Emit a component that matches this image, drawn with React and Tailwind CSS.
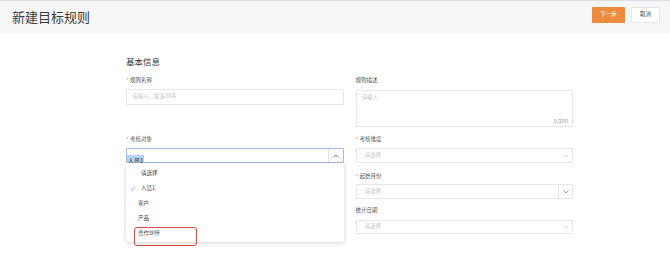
import React from "react";

const Chevron = ({ up = false, color = "#c8c8c8" }) => (
  <svg width="6" height="4" viewBox="0 0 6 4" className="block">
    <path
      d={up ? "M0.5 3.5 L3 1 L5.5 3.5" : "M0.5 0.5 L3 3 L5.5 0.5"}
      fill="none"
      stroke={color}
      strokeWidth="0.8"
    />
  </svg>
);

const Label = ({ req, children }) => (
  <div className="h-[8px] flex items-center text-[5.5px] leading-none text-[#555]">
    {req && <span className="text-[#e07a7a] mr-[2px] w-[2px]">*</span>}
    {!req && null}
    <span>{children}</span>
  </div>
);

const Select = ({ h = "h-[15px]", sep = false, dark = false, mt }) => (
  <div className={`${mt} ${h} border border-[#e6e6e6] rounded-[1px] flex items-center bg-white`}>
    <span className="pl-[8px] text-[5.5px] leading-none text-[#c4c4c4] flex-1">请选择</span>
    {sep && <div className="w-px self-stretch bg-[#e6e6e6]" />}
    <div className="w-[13px] flex justify-center">
      <Chevron color={dark ? "#888" : "#d0d0d0"} />
    </div>
  </div>
);

export default function App() {
  return (
    <div className="w-[670px] h-[277px] bg-white overflow-hidden font-['Noto_Sans_CJK_SC',sans-serif]">
      <header className="h-[33px] bg-[#f5f6f8] border-t border-[#dcdfe4] flex items-start justify-between pl-[12px] pr-[10px]">
        <h1 className="mt-[9px] text-[13px] leading-[14px] text-[#3a3a3a] font-normal">新建目标规则</h1>
        <div className="flex gap-[6px] mt-[6px]">
          <button className="w-[33px] h-[16px] bg-[#ec8b3d] text-white text-[5.5px] leading-none rounded-[1px]">下一步</button>
          <button className="w-[29px] h-[16px] bg-white border border-[#e6e6e6] text-[#444] text-[5.5px] leading-none rounded-[1px]">取消</button>
        </div>
      </header>

      <div className="ml-[126px] w-[447px]">
        <div className="mt-[23px] h-[10px] flex items-center text-[8.5px] leading-none text-[#333]">基本信息</div>

        <div className="grid grid-cols-2 gap-x-[12px] mt-[11px]">
          {/* left column */}
          <div className="flex flex-col">
            <Label req>规则名称</Label>
            <div className="mt-[4px] h-[16px] border border-[#e6e6e6] rounded-[1px] flex items-center pl-[5px] text-[5.5px] leading-none text-[#c4c4c4]">
              请输入，最多20字
            </div>
            <div className="mt-[31px]">
              <Label req>考核对象</Label>
            </div>
            <div className="relative mt-[4px]">
              <div className="h-[15px] border border-[#9fb8e4] rounded-[1px] flex items-center bg-white">
                <div className="flex-1 pl-0">
                  <span className="bg-[#b7d1f6] text-[6px] leading-[11px] inline-block px-[1px] text-[#333]">人员1</span>
                </div>
                <div className="w-px self-stretch bg-[#e3e3e3]" />
                <div className="w-[14px] flex justify-center">
                  <Chevron up color="#777" />
                </div>
              </div>
              <div className="absolute left-0 top-full w-[218px] h-[79px] bg-white shadow-[0_1px_4px_rgba(0,0,0,0.18)] pt-[3px]">
                <div className="h-[15px] flex items-center pl-[15px] text-[5.5px] leading-none text-[#444]">请选择</div>
                <div className="h-[15px] flex items-center pl-[5px] text-[5.5px] leading-none text-[#444]">
                  <span className="w-[10px] text-[#5b8def] text-[6px]">✓</span>
                  <span>人员1</span>
                </div>
                <div className="h-[15px] flex items-center pl-[12px] text-[5.5px] leading-none text-[#444]">客户</div>
                <div className="h-[15px] flex items-center pl-[12px] text-[5.5px] leading-none text-[#444]">产品</div>
                <div className="h-[15px] flex items-center pl-[12px] text-[5.5px] leading-none text-[#444]">合作伙伴</div>
                <div className="absolute left-[8px] top-[64px] w-[63px] h-[19px] border border-[#d24c40] rounded-[3px]" />
              </div>
            </div>
          </div>

          {/* right column */}
          <div className="flex flex-col">
            <Label>规则描述</Label>
            <div className="mt-[5px] h-[37px] border border-[#e6e6e6] rounded-[1px] relative px-[5px] pt-[4px]">
              <div className="text-[5.5px] leading-none text-[#c4c4c4]">请输入</div>
              <div className="absolute right-[4px] bottom-[2px] text-[5.5px] leading-none text-[#999]">0/200</div>
            </div>
            <div className="mt-[9px]">
              <Label req>考核维度</Label>
            </div>
            <Select mt="mt-[4px]" />
            <div className="mt-[10px]">
              <Label req>起始月份</Label>
            </div>
            <Select mt="mt-[3px]" sep dark />
            <div className="mt-[8px]">
              <Label>统计日期</Label>
            </div>
            <Select mt="mt-[5px]" h="h-[14px]" />
          </div>
        </div>
      </div>
    </div>
  );
}
